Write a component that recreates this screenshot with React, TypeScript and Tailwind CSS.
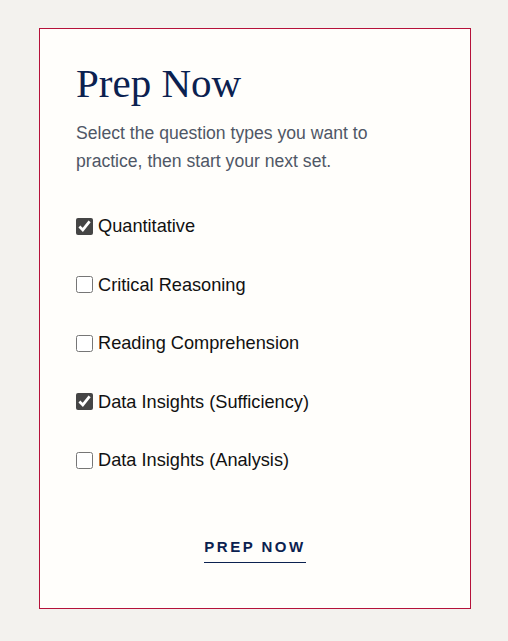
import React, { useState } from 'react';

const options = [
  { id: 'quant', label: 'Quantitative', checked: true },
  { id: 'cr', label: 'Critical Reasoning', checked: false },
  { id: 'rc', label: 'Reading Comprehension', checked: false },
  { id: 'ds', label: 'Data Insights (Sufficiency)', checked: true },
  { id: 'da', label: 'Data Insights (Analysis)', checked: false },
];

const App: React.FC = () => {
  const [selected, setSelected] = useState<Record<string, boolean>>(
    Object.fromEntries(options.map(o => [o.id, o.checked]))
  );

  return (
    <div className="min-h-screen bg-[#f3f2ee] px-[39px] pt-[28px] pb-[32px] font-['Liberation_Sans',Arial,sans-serif]">
      <div className="h-[581px] w-[432px] border border-[#b5123a] bg-[#fffefb] px-[36px] pt-[30px] flex flex-col">
        <h1 className="font-['Liberation_Serif','Times_New_Roman',serif] text-[41px] leading-[48px] text-[#0b2150]">
          Prep Now
        </h1>
        <p className="mt-[12px] text-[17.6px] leading-[28px] text-[#4f5766]">
          Select the question types you want to practice, then start your next set.
        </p>

        <div className="mt-[42px] flex flex-col gap-[38.5px]">
          {options.map(o => (
            <label key={o.id} className="flex items-center gap-[5px] h-[20px] text-[18.2px] text-[#111]">
              <input
                type="checkbox"
                checked={selected[o.id]}
                onChange={e => setSelected(prev => ({ ...prev, [o.id]: e.target.checked }))}
                className="m-0 -mt-[2px] h-[17px] w-[17px] accent-[#454545]"
              />
              {o.label}
            </label>
          ))}
        </div>

        <div className="mt-[65px] flex justify-center">
          <button className="border-b-[1.5px] border-[#0b2150] pb-[3px] text-[15px] font-bold tracking-[2.5px] text-[#0b2150]">
            PREP NOW
          </button>
        </div>
      </div>
    </div>
  );
};

export default App;
